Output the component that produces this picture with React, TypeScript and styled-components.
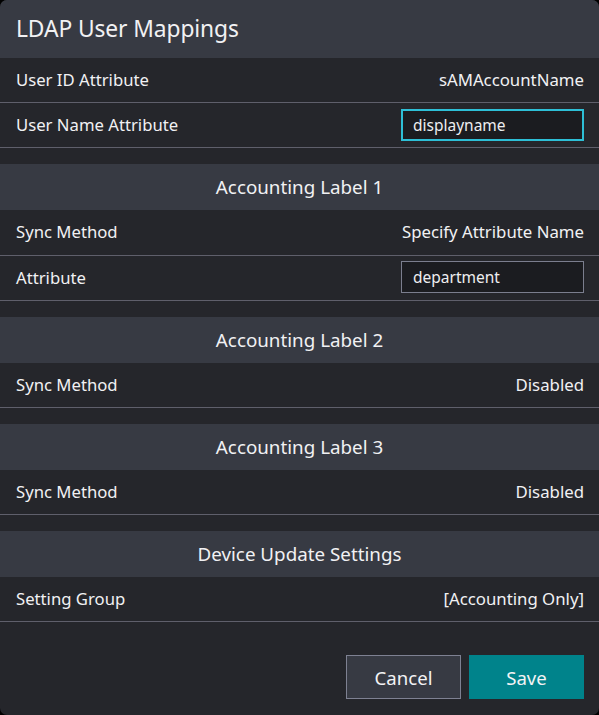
import React from "react";
import styled, { createGlobalStyle } from "styled-components";

const Global = createGlobalStyle`
  html, body { margin: 0; padding: 0; background: #000; }
  body { font-family: "Noto Sans", "Open Sans", sans-serif; }
  * { box-sizing: border-box; }
`;

const Dialog = styled.div`
  width: 599px;
  height: 715px;
  background: #25262b;
  border-radius: 7px;
  overflow: hidden;
  display: flex;
  flex-direction: column;
  color: #f1f1f3;
`;

const Title = styled.div`
  height: 58px;
  background: #373a43;
  display: flex;
  align-items: center;
  padding: 0 16px 2px;
  font-size: 22.8px;
  letter-spacing: -0.1px;
`;

const Section = styled.div<{ $gap?: boolean }>`
  display: flex;
  flex-direction: column;
  margin-top: ${(p) => (p.$gap ? "16px" : "0")};
`;

const SectionHeader = styled.div`
  height: 46px;
  background: #373a43;
  display: flex;
  align-items: center;
  justify-content: center;
  font-size: 18.8px;
`;

const Row = styled.div`
  height: 45.2px;
  display: flex;
  align-items: center;
  justify-content: space-between;
  padding: 0 15px 1px 16px;
  border-bottom: 1px solid #5f5f6b;
  font-size: 16.7px;
`;

const Value = styled.span`
  font-size: 16.8px;
`;

const Input = styled.input<{ $focused?: boolean }>`
  width: 183px;
  height: 32px;
  background: #1b1c20;
  color: #eeeef0;
  font-family: inherit;
  font-size: 15.5px;
  padding: 0 10px;
  outline: none;
  border: ${(p) => (p.$focused ? "2px solid #2ebfd6" : "1px solid #7b7e8e")};
  padding-left: ${(p) => (p.$focused ? "10px" : "11px")};
  border-radius: 0;
  caret-color: #fff;
`;

const Footer = styled.div`
  margin-top: auto;
  display: flex;
  justify-content: flex-end;
  gap: 8px;
  padding: 0 15px 16px;
`;

const Button = styled.button<{ $primary?: boolean }>`
  width: 115px;
  height: 44px;
  font-family: inherit;
  font-size: 18.6px;
  color: #f3f3f5;
  background: ${(p) => (p.$primary ? "#00838b" : "#373a43")};
  border: 1px solid ${(p) => (p.$primary ? "#00838b" : "#7e8192")};
  border-radius: 0;
  padding: 0;
`;

export default function App() {
  return (
    <>
      <Global />
      <Dialog>
        <Title>LDAP User Mappings</Title>
        <Section>
          <Row>
            <span>User ID Attribute</span>
            <Value>sAMAccountName</Value>
          </Row>
          <Row>
            <span>User Name Attribute</span>
            <Input $focused defaultValue="displayname" />
          </Row>
        </Section>
        <Section $gap>
          <SectionHeader>Accounting Label 1</SectionHeader>
          <Row>
            <span>Sync Method</span>
            <Value>Specify Attribute Name</Value>
          </Row>
          <Row>
            <span>Attribute</span>
            <Input defaultValue="department" />
          </Row>
        </Section>
        <Section $gap>
          <SectionHeader>Accounting Label 2</SectionHeader>
          <Row>
            <span>Sync Method</span>
            <Value>Disabled</Value>
          </Row>
        </Section>
        <Section $gap>
          <SectionHeader>Accounting Label 3</SectionHeader>
          <Row>
            <span>Sync Method</span>
            <Value>Disabled</Value>
          </Row>
        </Section>
        <Section $gap>
          <SectionHeader>Device Update Settings</SectionHeader>
          <Row>
            <span>Setting Group</span>
            <Value>[Accounting Only]</Value>
          </Row>
        </Section>
        <Footer>
          <Button>Cancel</Button>
          <Button $primary>Save</Button>
        </Footer>
      </Dialog>
    </>
  );
}
